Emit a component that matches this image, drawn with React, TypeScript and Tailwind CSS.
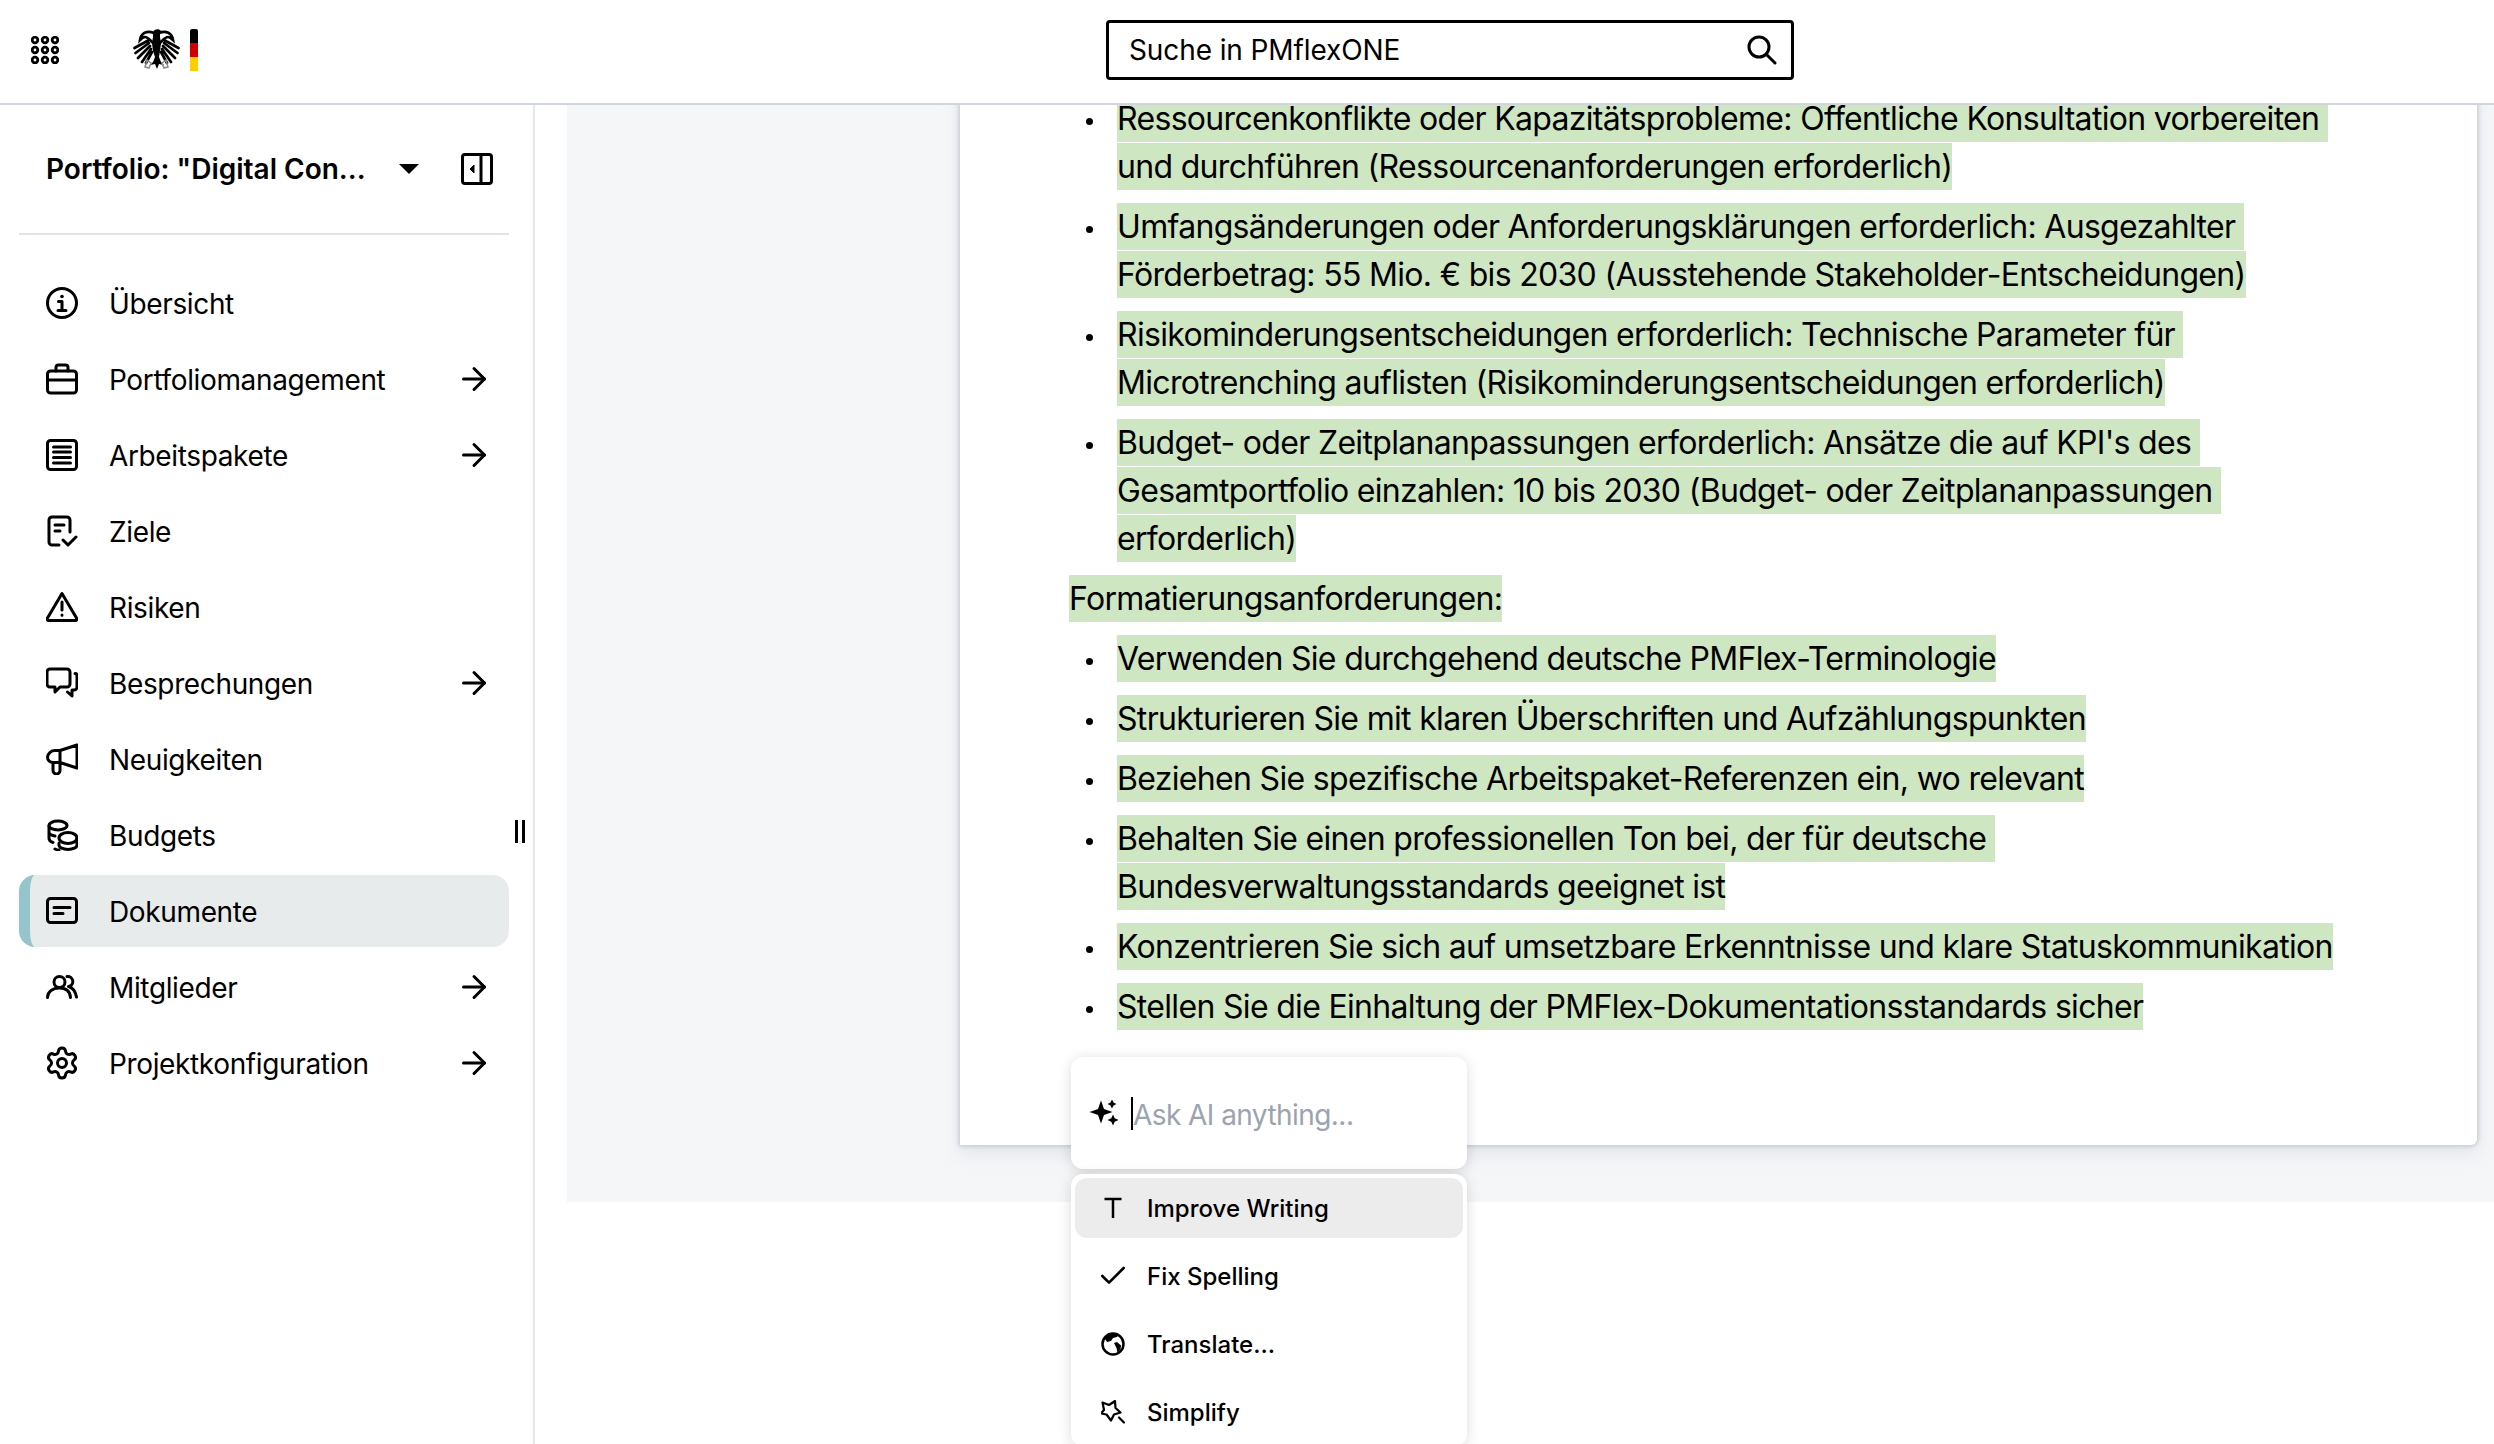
import { ArrowRight, Check, Settings } from "lucide-react";
import type { ReactNode } from "react";

const S = ({ children, w = 32, h = 32, sw = 3 }: { children: ReactNode; w?: number; h?: number; sw?: number }) => (
  <svg width={w} height={h} viewBox={`0 0 ${w} ${h}`} fill="none" stroke="#000" strokeWidth={sw} strokeLinecap="round" strokeLinejoin="round" className="shrink-0">
    {children}
  </svg>
);

const icons: Record<string, ReactNode> = {
  info: (
    <S>
      <circle cx="16" cy="16" r="14.5" />
      <circle cx="16" cy="9.5" r="1.8" fill="#000" stroke="none" />
      <path d="M12.5 14.5h3.5v9M12 23.5h8" />
    </S>
  ),
  case: (
    <S>
      <rect x="1.5" y="8" width="29" height="22" rx="3" />
      <path d="M10 8V4.5A2.5 2.5 0 0 1 12.5 2h7A2.5 2.5 0 0 1 22 4.5V8M1.5 17h29" />
    </S>
  ),
  list: (
    <S>
      <rect x="1.5" y="1.5" width="29" height="29" rx="3" />
      <path d="M7.5 8h17M7.5 13h17M7.5 18.5h17M7.5 24h17" />
    </S>
  ),
  goal: (
    <S>
      <path d="M24 17V5a3 3 0 0 0-3-3H6a3 3 0 0 0-3 3v22a3 3 0 0 0 3 3h7M9 10h9M9 16h5M17 25l5 5 8-8" />
    </S>
  ),
  risk: (
    <S>
      <path d="M16 2.5 30.5 27a1.5 1.5 0 0 1-1.3 2.5H2.8A1.5 1.5 0 0 1 1.5 27Z" />
      <path d="M16 11v8M16 24v.2" />
    </S>
  ),
  chat: (
    <S>
      <path d="M4 2h17a3 3 0 0 1 3 3v12a3 3 0 0 1-3 3h-7l-5 5v-5H4a3 3 0 0 1-3-3V5a3 3 0 0 1 3-3Z" />
      <path d="M29 6.5a2 2 0 0 1 2 2V20a3 3 0 0 1-3 3h-2v6l-4.5-4" />
    </S>
  ),
  news: (
    <S>
      <path d="M31 2v23l-17-5.5V7.5ZM14 7.5H9a7.5 7.5 0 0 0-7.5 6.5c0 3 2 5.5 6 5.5h6.5M7 19.5v8a3.5 3.5 0 0 0 7 0v-8" />
    </S>
  ),
  coins: (
    <S>
      <ellipse cx="12" cy="6.5" rx="9" ry="4.5" />
      <ellipse cx="22" cy="19" rx="9" ry="5.5" />
      <path d="M3 7v12c0 2.5 2 4 4 4.5M13 31c-1.8 0-3-.5-4-1M13 24v2c0 2.5 4 4.5 9 4.5s9-2 9-4.5v-7M3 13c0 2 3 3.5 6 4" />
    </S>
  ),
  doc: (
    <S>
      <rect x="1.5" y="3.5" width="29" height="24" rx="3" />
      <path d="M8 12.5h16M8 18.5h9" />
    </S>
  ),
  members: (
    <S>
      <circle cx="13.5" cy="11" r="5.5" />
      <path d="M1.5 26.5c0-5.5 5-9.5 12-9.5s10.5 4 11 9.5M21 5.5a5 5 0 0 1 1.5 10c3.5 1 7 5 8 10.5" />
    </S>
  ),
};

const nav: [string, string, boolean, boolean?][] = [
  ["info", "Übersicht", false],
  ["case", "Portfoliomanagement", true],
  ["list", "Arbeitspakete", true],
  ["goal", "Ziele", false],
  ["risk", "Risiken", false],
  ["chat", "Besprechungen", true],
  ["news", "Neuigkeiten", false],
  ["coins", "Budgets", false],
  ["doc", "Dokumente", false, true],
  ["members", "Mitglieder", true],
  ["gear", "Projektkonfiguration", true],
];

const Eagle = () => (
  <svg width="47" height="44" viewBox="0 0 47 44" className="shrink-0">
    <g fill="none" stroke="#000" strokeWidth="2.7" strokeLinecap="round">
      <path d="M21 5C14 2 8 5 7 12c2-2 4-3 5-3 3 0 5 3 8 6" />
      <path d="M16 12 1.5 20M16 15 2.5 25M17 18 5 30M18 21 9 34M19 24l-6 11" />
      <path d="M26 5c7-3 13 0 14 7-2-2-4-3-5-3-3 0-5 3-8 6" />
      <path d="M31 12l14.5 8M31 15l13.5 10M30 18l12 12M29 21l9 13M28 24l6 11" />
    </g>
    <path d="M20 4c1-3 6-4 8-1l3 1-4 1v4l1 6-1 8-1 6 2 5 3 3-5-1-2 5-2-5-5 1 3-3 2-5-2-6-1-8 1-6Z" fill="#000" />
    <path d="M14 32l4 3-2 5-4-1ZM33 32l-4 3 2 5 4-1Z" fill="none" stroke="#8a8a8a" strokeWidth="1.5" />
  </svg>
);

const Flag = () => (
  <div className="ml-[10px] flex h-[42px] w-[8px] flex-col overflow-hidden rounded-t-[2px]">
    <div className="flex-1 bg-black" />
    <div className="flex-1 bg-[#d00000]" />
    <div className="flex-1 bg-[#ffce00]" />
  </div>
);

const Mark = ({ children }: { children: string }) => (
  <span className="whitespace-pre-wrap bg-[#cfe6c3] py-[3.6px]">{children}</span>
);

const Li = ({ children }: { children: string }) => (
  <li className="flex">
    <div className="w-[48px] shrink-0 pl-[17px] pt-[23px]">
      <div className="h-[7px] w-[7px] rounded-full bg-black" />
    </div>
    <div className="min-w-0 flex-1">
      <Mark>{children}</Mark>
    </div>
  </li>
);

const MenuRow = ({ icon, label, active }: { icon: ReactNode; label: string; active?: boolean }) => (
  <div className={`flex h-[60px] items-center rounded-[12px] pl-[26px] ${active ? "bg-[#ececec]" : ""}`}>
    <div className="flex w-[24px] shrink-0 justify-center">{icon}</div>
    <span className="ml-[22px] pt-[2px] text-[24px] font-medium text-black">{label}</span>
  </div>
);

export default function App() {
  return (
    <div className="relative flex h-[1444px] w-[2494px] flex-col overflow-hidden bg-white font-['Inter',sans-serif] text-black">
      <header className="flex h-[105px] shrink-0 items-center border-b-2 border-[#d0d5dd] pb-[3px] pl-[31px]">
        <svg width="28" height="28" viewBox="0 0 28 28" fill="none" stroke="#000" strokeWidth="2.8" className="shrink-0">
          {[4, 14, 24].map((y) => [4, 14, 24].map((x) => <circle key={`${x}-${y}`} cx={x} cy={y} r="2.8" />))}
        </svg>
        <div className="ml-[74px] flex items-center">
          <Eagle />
          <Flag />
        </div>
        <div className="ml-[908px] flex h-[60px] w-[688px] items-center justify-between rounded-[4px] border-[3px] border-black pl-[20px] pr-[14px]">
          <span className="text-[28px] tracking-[-0.1px] text-black">Suche in PMflexONE</span>
          <svg width="30" height="30" viewBox="0 0 30 30" fill="none" stroke="#000" strokeWidth="3" strokeLinecap="round" className="shrink-0">
            <circle cx="12" cy="12" r="10" />
            <path d="M19.5 19.5 28 28" />
          </svg>
        </div>
      </header>

      <div className="flex min-h-0 flex-1">
        <aside className="relative w-[535px] shrink-0 border-r-2 border-[#e4e7ec]">
          <div className="flex h-[128px] items-center pl-[46px] pr-[40px]">
            <span className="w-[353px] text-[28px] font-semibold text-black">Portfolio: "Digital Con...</span>
            <svg width="20" height="10" viewBox="0 0 20 10" className="shrink-0">
              <path d="M0 0h20L10 10Z" fill="#000" />
            </svg>
            <svg width="32" height="32" viewBox="0 0 32 32" fill="none" stroke="#000" strokeWidth="3" className="ml-auto shrink-0">
              <rect x="1.5" y="1.5" width="29" height="29" rx="2.5" />
              <path d="M20 1.5v29" />
              <path d="M13 12v8l-4-4Z" fill="#000" strokeWidth="1" />
            </svg>
          </div>
          <div className="mx-[19px] h-[2px] w-[490px] bg-[#dfe3e8]" />
          <nav className="ml-[19px] mt-[32px] flex w-[490px] flex-col gap-[4px]">
            {nav.map(([icon, label, arrow, active]) => (
              <div
                key={label}
                className={`flex h-[72px] items-center gap-[31px] pr-[17px] ${
                  active ? "rounded-[16px] border-l-[11px] border-[#94c5ca] bg-[#e8ebec] pl-[16px]" : "pl-[27px]"
                }`}
              >
                {icon === "gear" ? <Settings size={36} strokeWidth={2} color="#000" className="-mx-[2px] shrink-0" /> : icons[icon]}
                <span className="pt-[2px] text-[28px] tracking-[-0.36px] text-black">{label}</span>
                {arrow && <ArrowRight size={36} strokeWidth={2} color="#000" className="ml-auto shrink-0" />}
              </div>
            ))}
          </nav>
          <div className="absolute left-[515px] top-[715px] flex gap-[4px]">
            <div className="h-[23px] w-[3px] bg-black" />
            <div className="h-[23px] w-[3px] bg-black" />
          </div>
        </aside>

        <main className="min-w-0 flex-1 pl-[32px]">
          <div className="flex h-[1097px] items-end overflow-hidden bg-[#f5f6f8] pb-[57px] pl-[393px] pr-[17px]">
            <div className="w-full shrink-0 rounded-br-[6px] bg-white pb-[114px] pl-[109px] pr-[137px] text-[32px] leading-[48px] tracking-[-0.68px] shadow-[0_0_4px_1px_rgba(170,180,195,0.7),0_8px_18px_rgba(190,196,208,0.35)]">
              <ul className="flex flex-col gap-[12px]">
                <Li>Ressourcenkonflikte oder Kapazitätsprobleme: Offentliche Konsultation vorbereiten und durchführen (Ressourcenanforderungen erforderlich)</Li>
                <Li>Umfangsänderungen oder Anforderungsklärungen erforderlich: Ausgezahlter Förderbetrag: 55 Mio. € bis 2030 (Ausstehende Stakeholder-Entscheidungen)</Li>
                <Li>Risikominderungsentscheidungen erforderlich: Technische Parameter für Microtrenching auflisten (Risikominderungsentscheidungen erforderlich)</Li>
                <Li>Budget- oder Zeitplananpassungen erforderlich: Ansätze die auf KPI's des Gesamtportfolio einzahlen: 10 bis 2030 (Budget- oder Zeitplananpassungen erforderlich)</Li>
                <li>
                  <Mark>Formatierungsanforderungen:</Mark>
                </li>
                <Li>Verwenden Sie durchgehend deutsche PMFlex-Terminologie</Li>
                <Li>Strukturieren Sie mit klaren Überschriften und Aufzählungspunkten</Li>
                <Li>Beziehen Sie spezifische Arbeitspaket-Referenzen ein, wo relevant</Li>
                <Li>Behalten Sie einen professionellen Ton bei, der für deutsche Bundesverwaltungsstandards geeignet ist</Li>
                <Li>Konzentrieren Sie sich auf umsetzbare Erkenntnisse und klare Statuskommunikation</Li>
                <Li>Stellen Sie die Einhaltung der PMFlex-Dokumentationsstandards sicher</Li>
              </ul>
            </div>
          </div>
        </main>
      </div>

      <div className="absolute left-[1071px] top-[1057px] flex w-[396px] flex-col gap-[5px]">
        <div className="flex h-[112px] items-center rounded-[12px] bg-white pl-[18px] shadow-[0_2px_14px_rgba(0,0,0,0.14)]">
          <svg width="30" height="30" viewBox="0 0 30 30" fill="#000" className="shrink-0">
            <path d="M12 2.5 15 11 23.5 14 15 17 12 25.5 9 17 .5 14 9 11Z" />
            <path d="M23 1.5 24.5 4.5 27.5 6 24.5 7.5 23 10.5 21.5 7.5 18.5 6 21.5 4.5Z" />
            <path d="M24 16.5 25.7 20.3 29.5 22 25.7 23.7 24 27.5 22.3 23.700 18.5 22 22.3 20.3Z" />
          </svg>
          <div className="ml-[12px] h-[33px] w-[2px] bg-black" />
          <span className="pt-[3px] text-[28px] tracking-[-0.02em] text-[#9ca3af]">Ask AI anything...</span>
        </div>
        <div className="flex flex-col gap-[8px] rounded-[12px] bg-white p-[4px] shadow-[0_2px_14px_rgba(0,0,0,0.14)]">
          <MenuRow
            active
            label="Improve Writing"
            icon={
              <S w={20} h={22} sw={2.5}>
                <path d="M1.5 2h17M10 2v19" strokeLinecap="butt" />
              </S>
            }
          />
          <MenuRow label="Fix Spelling" icon={<Check size={32} strokeWidth={2} color="#000" className="-mx-[4px] shrink-0" />} />
          <MenuRow
            label="Translate..."
            icon={
              <S w={24} h={24} sw={2.5}>
                <circle cx="12" cy="12" r="10.5" />
                <path d="M5 4.5 9 2h9l-2 3-4 1-2 3-4 1-2-3ZM13 11l3-1 4 3.5-.5 4-3 3-1-4.5Z" fill="#000" stroke="none" />
              </S>
            }
          />
          <MenuRow
            label="Simplify"
            icon={
              <S w={24} h={24} sw={2.2}>
                <path d="M3 10 1.5 2.5 8 5 14 1l.5 7 5 4.5-6.5 2-3 6-4.5-6-5.5-1Z" />
                <path d="M18 17.5l5 5" />
              </S>
            }
          />
        </div>
      </div>
    </div>
  );
}
